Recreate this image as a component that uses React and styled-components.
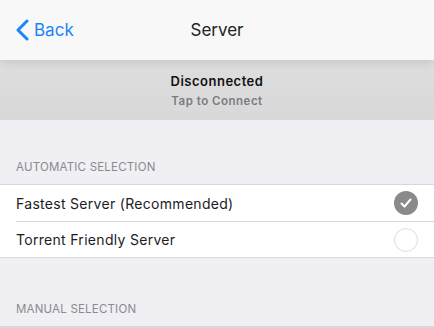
import React from 'react';
import styled, { createGlobalStyle } from 'styled-components';

const GlobalStyle = createGlobalStyle`
  html, body {
    margin: 0;
    padding: 0;
    background: #efeff4;
    font-family: Inter, "Open Sans", sans-serif;
  }
`;

const servers = [
  { name: 'Fastest Server (Recommended)', selected: true },
  { name: 'Torrent Friendly Server', selected: false },
];

const App = () => {
  return (
    <Page>
      <GlobalStyle />
      <NavBar>
        <BackButton>
          <svg width="13" height="22" viewBox="0 0 13 22">
            <path d="M11 2 L2 11 L11 20" fill="none" stroke="#1b84fa" strokeWidth="3" strokeLinecap="round" strokeLinejoin="round" />
          </svg>
          Back
        </BackButton>
        <Title>Server</Title>
      </NavBar>
      <StatusBand>
        <StatusTitle>Disconnected</StatusTitle>
        <StatusHint>Tap to Connect</StatusHint>
      </StatusBand>
      <SectionHeader>Automatic Selection</SectionHeader>
      <List>
        {servers.map((s) => (
          <Row key={s.name}>
            <RowLabel>{s.name}</RowLabel>
            <Radio $selected={s.selected}>
              {s.selected && (
                <svg width="12" height="10" viewBox="0 0 12 10">
                  <path d="M1.5 5.5 L4.5 8.5 L10.5 1.5" fill="none" stroke="#fff" strokeWidth="2" strokeLinecap="round" strokeLinejoin="round" />
                </svg>
              )}
            </Radio>
          </Row>
        ))}
      </List>
      <SectionHeader $top={44}>Manual Selection</SectionHeader>
      <List />
    </Page>
  );
};

export default App;

const Page = styled.div`
  width: 434px;
  min-height: 328px;
  background: #efeff4;
  overflow: hidden;
`;

const NavBar = styled.div`
  position: relative;
  z-index: 1;
  height: 60px;
  background: #f8f8f8;
  display: flex;
  align-items: center;
  justify-content: center;
  box-shadow: 0 2px 10px rgba(0, 0, 0, 0.12);
`;

const BackButton = styled.div`
  position: absolute;
  left: 16px;
  top: 19px;
  display: flex;
  align-items: center;
  gap: 5px;
  color: #1b84fa;
  font-size: 17px;
`;

const Title = styled.div`
  font-size: 17px;
  color: #222;
`;

const StatusBand = styled.div`
  height: 60px;
  background: linear-gradient(#dedede, #d8d8d8);
  display: flex;
  flex-direction: column;
  align-items: center;
  justify-content: center;
  gap: 5px;
`;

const StatusTitle = styled.div`
  font-size: 13px;
  font-weight: 600;
  letter-spacing: 0.5px;
  color: #111;
`;

const StatusHint = styled.div`
  font-size: 11.5px;
  font-weight: 600;
  letter-spacing: 0.5px;
  color: #7b7b85;
`;

const SectionHeader = styled.div`
  padding: ${(p) => p.$top || 40}px 16px 10px;
  font-size: 11.5px;
  color: #8a8a8f;
  text-transform: uppercase;
  letter-spacing: 0.2px;
`;

const List = styled.div`
  background: #fff;
  border-top: 1px solid #d8d8dc;
  border-bottom: 1px solid #d8d8dc;
`;

const Row = styled.div`
  box-sizing: border-box;
  height: 36px;
  margin-left: 16px;
  padding-right: 16px;
  display: flex;
  align-items: center;
  justify-content: space-between;
  & + & {
    border-top: 1px solid #d8d8dc;
  }
`;

const RowLabel = styled.div`
  font-size: 14px;
  letter-spacing: 0.3px;
  color: #1c1c1e;
`;

const Radio = styled.div`
  width: 24px;
  height: 24px;
  box-sizing: border-box;
  border-radius: 50%;
  display: flex;
  align-items: center;
  justify-content: center;
  background: ${(p) => (p.$selected ? '#8a8a8a' : '#fff')};
  border: ${(p) => (p.$selected ? 'none' : '1.5px solid #dcdcdc')};
`;
